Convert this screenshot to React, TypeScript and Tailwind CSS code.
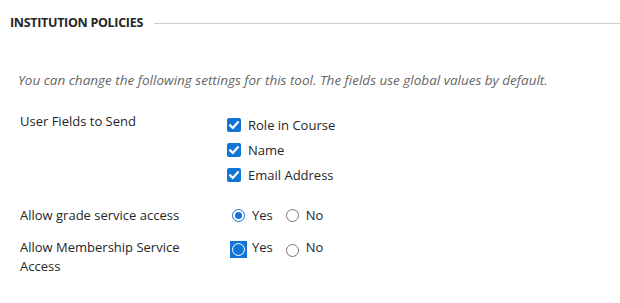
import React from "react";

function Check() {
  return (
    <span className="flex h-[14px] w-[14px] shrink-0 items-center justify-center rounded-[2px] bg-[#1174d6]">
      <svg viewBox="0 0 14 14" className="h-[14px] w-[14px]">
        <path d="M3.2 7.4 L5.8 10 L10.8 4.4" fill="none" stroke="#fff" strokeWidth="2.2" strokeLinecap="square" />
      </svg>
    </span>
  );
}

function Radio({ checked, focused }: { checked?: boolean; focused?: boolean }) {
  if (checked && focused) {
    return (
      <span className="flex h-[17px] w-[17px] shrink-0 items-center justify-center bg-[#1174d6]">
        <span className="flex h-[13px] w-[13px] items-center justify-center rounded-full border-[1.5px] border-white bg-[#1a7ad8]">
          <span className="h-[7px] w-[7px] rounded-full bg-[#1174d6]" />
        </span>
      </span>
    );
  }
  if (checked) {
    return (
      <span className="flex h-[17px] w-[17px] shrink-0 items-center justify-center">
        <span className="flex h-[13px] w-[13px] items-center justify-center rounded-full border-[1.5px] border-[#1174d6] bg-white">
          <span className="h-[7px] w-[7px] rounded-full bg-[#1174d6]" />
        </span>
      </span>
    );
  }
  return (
    <span className="flex h-[17px] w-[17px] shrink-0 items-center justify-center">
      <span className="h-[13px] w-[13px] rounded-full border border-[#767676] bg-white" />
    </span>
  );
}

function YesNo({ focused }: { focused?: boolean }) {
  return (
    <div className="flex items-start">
      <div className="flex items-start gap-[5px]">
        <span className={focused ? "mt-[3px]" : "mt-[1px]"}>
          <Radio checked focused={focused} />
        </span>
        <span>Yes</span>
      </div>
      <div className="ml-[11px] flex items-start gap-[5px]">
        <span className={focused ? "mt-[4px]" : "mt-[1px]"}>
          <Radio />
        </span>
        <span>No</span>
      </div>
    </div>
  );
}

export default function App() {
  const fields = ["Role in Course", "Name", "Email Address"];

  return (
    <div
      className="h-[303px] w-[620px] overflow-hidden bg-white text-[13px] leading-[18px] text-[#262626]"
      style={{ fontFamily: '"Open Sans", "Noto Sans", sans-serif' }}
    >
      <div className="flex items-center pl-[10px] pt-[14px]">
        <h2 className="text-[12.5px] font-bold uppercase leading-[18px] tracking-[-0.3px] text-[#262626]">
          Institution Policies
        </h2>
        <div className="ml-[11px] h-px flex-1 bg-[#cdcdcd]" />
      </div>

      <p className="mt-[39px] pl-[18px] text-[13.5px] italic text-[#666]">
        You can change the following settings for this tool. The fields use global values by default.
      </p>

      <div className="mt-[23px] pl-[20px]">
        <div className="flex">
          <div className="w-[207px]">User Fields to Send</div>
          <div className="mt-[4px] flex flex-col gap-[7px]">
            {fields.map((f) => (
              <label key={f} className="flex items-center gap-[7px]">
                <Check />
                <span>{f}</span>
              </label>
            ))}
          </div>
        </div>

        <div className="mt-[22px] flex">
          <div className="w-[207px]">Allow grade service access</div>
          <div className="pl-[3px]">
            <YesNo />
          </div>
        </div>

        <div className="mt-[14px] flex">
          <div className="w-[207px] leading-[19px]">
            Allow Membership Service
            <br />
            Access
          </div>
          <div className="pl-[3px]">
            <YesNo focused />
          </div>
        </div>
      </div>
    </div>
  );
}
